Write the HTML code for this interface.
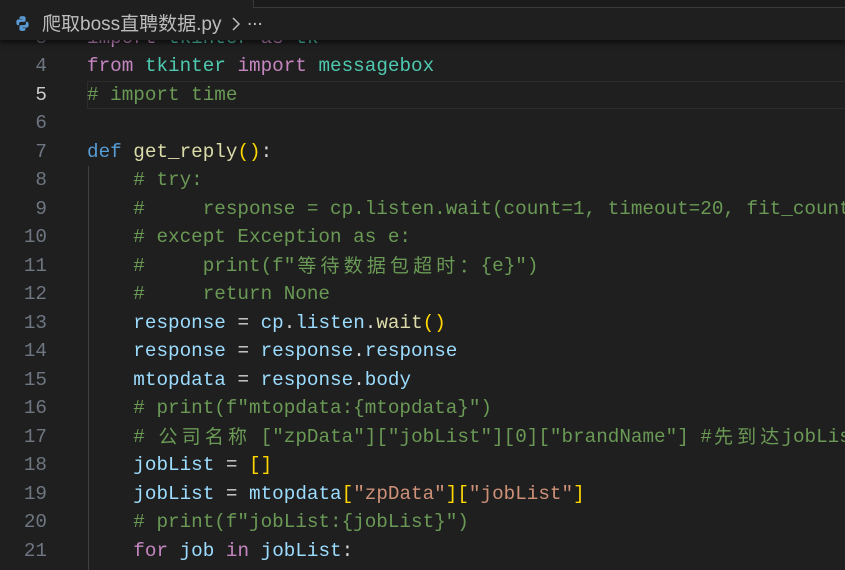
<!DOCTYPE html>
<html><head><meta charset="utf-8"><style>
html,body{margin:0;padding:0;width:845px;height:570px;overflow:hidden;background:#1f1f1f;}
.ed{position:absolute;left:0;top:0;width:845px;height:570px;overflow:hidden;font-family:"Liberation Mono","Noto Sans CJK SC",monospace;font-size:19.3px;}
.ln{position:absolute;left:0;width:47px;text-align:right;color:#6e7681;height:28.47px;line-height:28.47px;}
.cd{position:absolute;left:87px;right:0;overflow:hidden;white-space:pre;height:28.47px;line-height:28.47px;color:#cccccc;}
.k{color:#c586c0}.m{color:#4ec9b0}.c{color:#6a9955}.d{color:#569cd6}.f{color:#dcdcaa}.v{color:#9cdcfe}.s{color:#ce9178}.y{color:#ffd700}.p{color:#da70d6}.w{color:#d4d4d4}
.z{display:inline-block;width:23.16px;text-align:center;font-family:"Noto Sans CJK SC",sans-serif;font-size:19px;line-height:26px;height:28.47px;vertical-align:top;}
.cur{position:absolute;left:87px;top:81px;width:760px;height:26px;border:1px solid #2c2c2c;}
.guide{position:absolute;left:88px;top:166px;width:1px;height:404px;background:#404040;}
.bar{position:absolute;left:0;top:0;width:845px;height:40px;background:#1f1f1f;box-shadow:0 3px 5px rgba(0,0,0,0.6);z-index:5;}
.bar .box{position:absolute;left:253px;top:0;width:600px;height:7px;border-bottom:1px solid #3a3a3a;border-left:1px solid #3a3a3a;background:#1b1b1b;}
.title{position:absolute;left:42px;top:9px;font-family:"Liberation Sans","Noto Sans CJK SC",sans-serif;font-size:19px;color:#bdbdbd;white-space:pre;}
</style></head><body>
<div class="ed">
<div class="cur"></div>
<div class="guide"></div>
<div class="ln" style="top:24px">3</div><div class="cd" style="top:24px"><span class="k">import</span> <span class="m">tkinter</span> <span class="k">as</span> <span class="m">tk</span></div>
<div class="ln" style="top:52px">4</div><div class="cd" style="top:52px"><span class="k">from</span> <span class="m">tkinter</span> <span class="k">import</span> <span class="m">messagebox</span></div>
<div class="ln" style="top:80.5px;color:#cccccc">5</div><div class="cd" style="top:80.5px"><span class="c"># import time</span></div>
<div class="ln" style="top:109px">6</div>
<div class="ln" style="top:137.5px">7</div><div class="cd" style="top:137.5px"><span class="d">def</span> <span class="f">get_reply</span><span class="y">()</span><span class="w">:</span></div>
<div class="ln" style="top:166px">8</div><div class="cd" style="top:166px">    <span class="c"># try:</span></div>
<div class="ln" style="top:194.5px">9</div><div class="cd" style="top:194.5px">    <span class="c">#     response = cp.listen.wait(count=1, timeout=20, fit_count=False)</span></div>
<div class="ln" style="top:223px">10</div><div class="cd" style="top:223px">    <span class="c"># except Exception as e:</span></div>
<div class="ln" style="top:251.5px">11</div><div class="cd" style="top:251.5px">    <span class="c">#     print(f"<span class="z">等</span><span class="z">待</span><span class="z">数</span><span class="z">据</span><span class="z">包</span><span class="z">超</span><span class="z">时</span><span class="z">：</span>{e}")</span></div>
<div class="ln" style="top:280px">12</div><div class="cd" style="top:280px">    <span class="c">#     return None</span></div>
<div class="ln" style="top:308.5px">13</div><div class="cd" style="top:308.5px">    <span class="v">response</span> <span class="w">=</span> <span class="v">cp</span><span class="w">.</span><span class="v">listen</span><span class="w">.</span><span class="f">wait</span><span class="y">()</span></div>
<div class="ln" style="top:337px">14</div><div class="cd" style="top:337px">    <span class="v">response</span> <span class="w">=</span> <span class="v">response</span><span class="w">.</span><span class="v">response</span></div>
<div class="ln" style="top:365.5px">15</div><div class="cd" style="top:365.5px">    <span class="v">mtopdata</span> <span class="w">=</span> <span class="v">response</span><span class="w">.</span><span class="v">body</span></div>
<div class="ln" style="top:394px">16</div><div class="cd" style="top:394px">    <span class="c"># print(f"mtopdata:{mtopdata}")</span></div>
<div class="ln" style="top:422.5px">17</div><div class="cd" style="top:422.5px">    <span class="c"># <span class="z">公</span><span class="z">司</span><span class="z">名</span><span class="z">称</span> ["zpData"]["jobList"][0]["brandName"] #<span class="z">先</span><span class="z">到</span><span class="z">达</span>jobList</span></div>
<div class="ln" style="top:451px">18</div><div class="cd" style="top:451px">    <span class="v">jobList</span> <span class="w">=</span> <span class="y">[]</span></div>
<div class="ln" style="top:479.5px">19</div><div class="cd" style="top:479.5px">    <span class="v">jobList</span> <span class="w">=</span> <span class="v">mtopdata</span><span class="y">[</span><span class="s">"zpData"</span><span class="y">][</span><span class="s">"jobList"</span><span class="y">]</span></div>
<div class="ln" style="top:508px">20</div><div class="cd" style="top:508px">    <span class="c"># print(f"jobList:{jobList}")</span></div>
<div class="ln" style="top:536.5px">21</div><div class="cd" style="top:536.5px">    <span class="k">for</span> <span class="v">job</span> <span class="k">in</span> <span class="v">jobList</span><span class="w">:</span></div>
</div>
<div class="bar"><div class="box"></div>
<svg style="position:absolute;left:14px;top:15px" width="17" height="17" viewBox="0 0 16 16">
<path d="M7.9 1C5 1 5.2 2.3 5.2 2.3V3.7h2.8v.4H4.1S2.2 3.9 2.2 6.8s1.6 2.8 1.6 2.8h1V8.2s-.1-1.7 1.7-1.7h2.8s1.6 0 1.6-1.6V2.6S11.2 1 7.9 1z" fill="#5b9bd5"/>
<path d="M8.1 15c2.9 0 2.7-1.3 2.7-1.3V12.3H8v-.4h3.9s1.9.2 1.9-2.7-1.6-2.8-1.6-2.8h-1v1.4s.1 1.7-1.7 1.7H6.7s-1.6 0-1.6 1.6v2.3S4.8 15 8.1 15z" fill="#5b9bd5"/>
</svg>
<div class="title">爬取boss直聘数据.py</div>
<svg style="position:absolute;left:230px;top:16px" width="12" height="16" viewBox="0 0 12 16"><path d="M3 2l6 6-6 6" fill="none" stroke="#bdbdbd" stroke-width="1.5"/></svg>
<div class="title" style="left:247px">...</div>
</div>
</body></html>
